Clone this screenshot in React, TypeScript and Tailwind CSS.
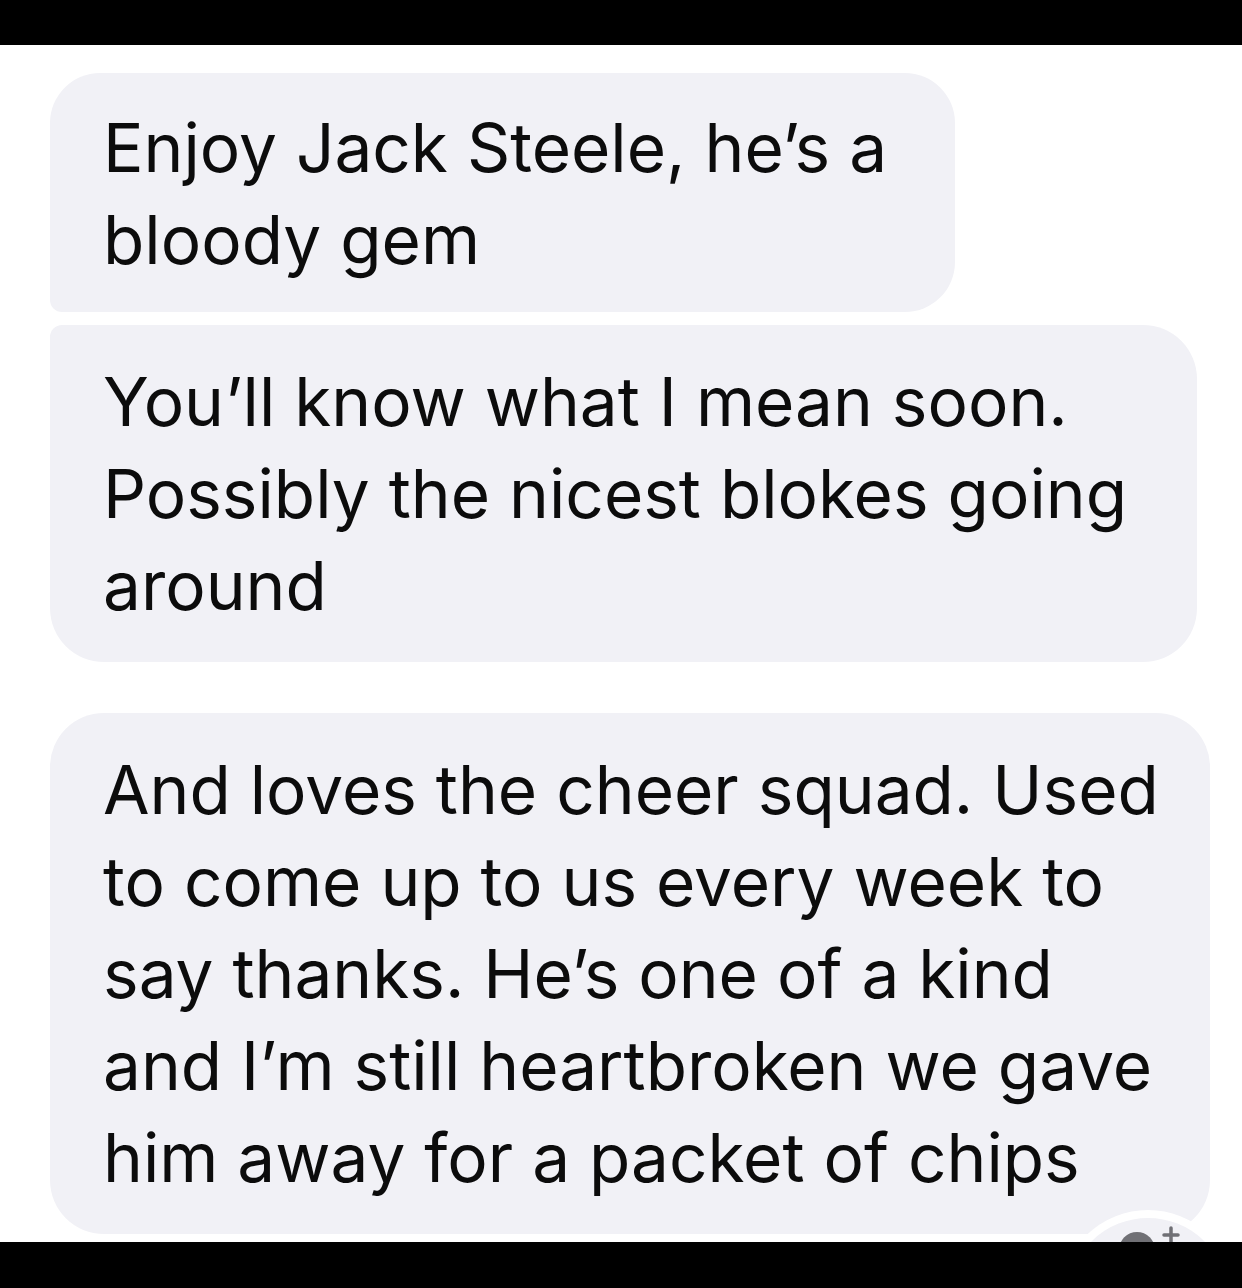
const font = { fontFamily: "Inter, 'Liberation Sans', sans-serif" }

const messages = [
  {
    id: 1,
    lines: ["Enjoy Jack Steele, he’s a", "bloody gem"],
    className: "w-[905px] rounded-[50px] rounded-bl-[12px] pt-[29px] pb-[26px]",
  },
  {
    id: 2,
    lines: ["You’ll know what I mean soon.", "Possibly the nicest blokes going", "around"],
    className: "mt-[13px] w-[1147px] rounded-[54px] rounded-tl-[12px] pt-[31px] pb-[30px]",
  },
  {
    id: 3,
    lines: [
      "And loves the cheer squad. Used",
      "to come up to us every week to",
      "say thanks. He’s one of a kind",
      "and I’m still heartbroken we gave",
      "him away for a packet of chips",
    ],
    className: "mt-[51px] w-[1160px] rounded-[54px] pt-[31px] pb-[30px]",
  },
]

// tapback button, mostly hidden under the bottom bar
function ReactionBadge() {
  return (
    <div className="absolute left-[1010px] top-[497px] h-[176px] w-[176px] rounded-full border-[8px] border-white bg-[#f1f1f6]">
      <svg width="160" height="40" viewBox="0 0 160 40">
        <circle cx="69" cy="32" r="18" fill="#707075" />
        <path d="M103 10v14M96 17h14" stroke="#707075" strokeWidth="3.5" strokeLinecap="round" />
      </svg>
    </div>
  )
}

export default function App() {
  return (
    <div className="flex h-[1288px] w-full flex-col overflow-hidden bg-white" style={font}>
      <div className="h-[45px] shrink-0 bg-black" />

      <div className="relative flex-1 overflow-hidden bg-white pl-[50px] pt-[28px]">
        {messages.map((m) => (
          <div key={m.id} className={`relative bg-[#f1f1f6] pl-[53px] ${m.className}`}>
            {m.lines.map((line) => (
              <div key={line} className="whitespace-nowrap text-[67.5px] leading-[92px] text-[#0c0c0c]">
                {line}
              </div>
            ))}
            {m.id === 3 && <ReactionBadge />}
          </div>
        ))}
      </div>

      <div className="relative z-10 h-[46px] shrink-0 bg-black" />
    </div>
  )
}
